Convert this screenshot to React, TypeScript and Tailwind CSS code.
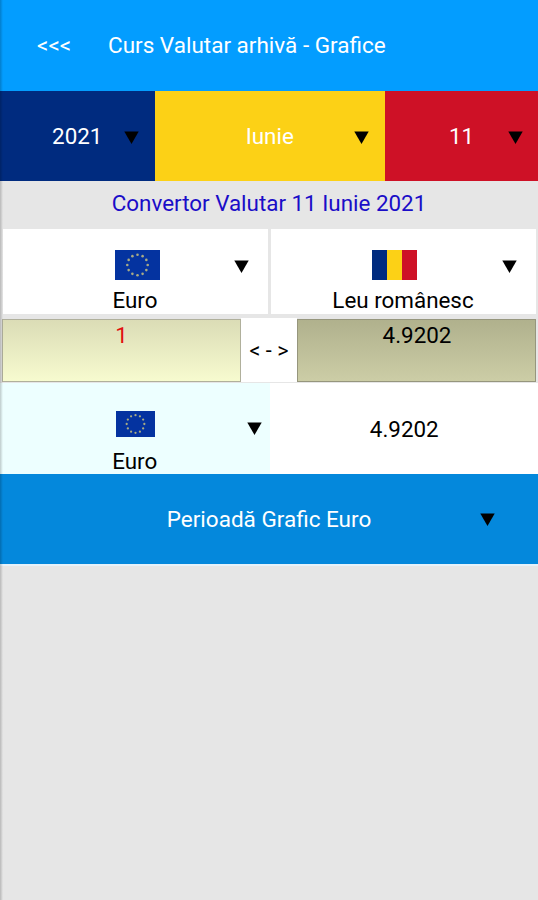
import type { ReactNode } from "react";
import clsx from "clsx";

const STARS = Array.from({ length: 12 }, (_, i) => {
  const angle = (i * Math.PI) / 6;
  return { x: 22.5 + 10.2 * Math.sin(angle), y: 15 - 10.2 * Math.cos(angle) };
});

function Arrow({ className }: { className?: string }) {
  return (
    <svg
      width="15"
      height="13"
      viewBox="0 0 15 13"
      className={clsx("col-start-1 row-start-1 justify-self-end", className)}
    >
      <path d="M0.3 0.5H14.7L7.5 13z" fill="#000" />
    </svg>
  );
}

function EuFlag({ className }: { className?: string }) {
  return (
    <svg viewBox="0 0 45 30" preserveAspectRatio="none" className={className}>
      <rect width="45" height="30" fill="#0433a0" />
      {STARS.map((s, i) => (
        <circle key={i} cx={s.x} cy={s.y} r="1.3" fill="#a9ab84" />
      ))}
    </svg>
  );
}

function RoFlag({ className }: { className?: string }) {
  return (
    <svg viewBox="0 0 45 30" preserveAspectRatio="none" className={className}>
      <rect width="15" height="30" fill="#002b7f" />
      <rect x="15" width="15" height="30" fill="#fcd116" />
      <rect x="30" width="15" height="30" fill="#ce1126" />
    </svg>
  );
}

interface SelectProps {
  className: string;
  arrowClass: string;
  children: ReactNode;
}

// Label stays centered on the full width, arrow shares the same grid cell
function Select({ className, arrowClass, children }: SelectProps) {
  return (
    <button className={clsx("grid grid-cols-1 items-center", className)}>
      <span className="col-start-1 row-start-1 flex flex-col items-center">
        {children}
      </span>
      <Arrow className={arrowClass} />
    </button>
  );
}

export default function App() {
  return (
    <div className="relative flex h-[900px] w-[538px] flex-col bg-[#e6e6e6] font-['Roboto','Noto_Sans',sans-serif] text-[22.4px] leading-[26px] text-black">
      {/* Soft shadow along the left edge of the screen */}
      <div className="pointer-events-none absolute inset-y-0 left-0 w-[3px] bg-linear-to-r from-black/20 to-transparent" />

      <header className="flex h-[90.5px] items-center bg-[#039dff] text-white">
        <button className="ml-[37px] w-[71px] text-left text-[22.4px]">
          {"<<<"}
        </button>
        <h1 className="text-[22.5px]">Curs Valutar arhivă - Grafice</h1>
      </header>

      <div className="grid h-[90px] grid-cols-[154.5px_230.5px_153px] text-white">
        <Select className="bg-[#002b7f]" arrowClass="mr-4 mt-[3px]">
          2021
        </Select>
        <Select className="bg-[#fcd116]" arrowClass="mr-4 mt-[3px]">
          Iunie
        </Select>
        <Select className="bg-[#ce1126]" arrowClass="mr-[15px] mt-[3px]">
          11
        </Select>
      </div>

      <h2 className="flex h-12 items-center justify-center pb-[3px] text-[#1a0dc8]">
        Convertor Valutar 11 Iunie 2021
      </h2>

      <div className="grid h-[85.5px] grid-cols-2 gap-[3px] px-[2.5px]">
        <Select className="bg-white pt-[21px]" arrowClass="mr-[19px] mb-[31px]">
          <EuFlag className="mb-[7px] ml-1 h-[30px] w-[45px]" />
          Euro
        </Select>
        <Select className="bg-white pt-[21px]" arrowClass="mr-[19px] mb-[31px]">
          <RoFlag className="mr-[18px] mb-[7px] h-[30px] w-[45px]" />
          Leu românesc
        </Select>
      </div>

      <div className="mt-1 flex h-[65px] px-[2px]">
        <div className="my-[0.5px] h-[63px] w-[239px] border border-[#b0b09c] bg-linear-to-b from-[#dbdcb6] to-[#f7fbcf] pt-[2px] text-center text-[#e11010]">
          1
        </div>
        <button className="h-16 flex-1 bg-white pt-0.5 text-[21.5px] whitespace-nowrap">
          {"< - >"}
        </button>
        <div className="my-[0.5px] h-[63px] w-[239px] border border-[#96967d] bg-linear-to-b from-[#b0b18d] to-[#cccda6] pt-[2px] pl-px text-center">
          4.9202
        </div>
      </div>

      <div className="flex h-[91px] bg-white">
        <Select
          className="w-[269.5px] bg-[#edffff] pt-[27px]"
          arrowClass="mr-2 mb-[27px]"
        >
          <EuFlag className="mb-[11px] ml-px h-[26px] w-[39px]" />
          Euro
        </Select>
        <div className="flex flex-1 items-center justify-center pl-px">
          4.9202
        </div>
      </div>

      <Select
        className="h-[90px] bg-[#0488dc] text-[22.5px] text-white"
        arrowClass="mr-[43px] mt-px"
      >
        Perioadă Grafic Euro
      </Select>
      <div className="h-[1.5px] bg-[#e6f2fa]" />
    </div>
  );
}
